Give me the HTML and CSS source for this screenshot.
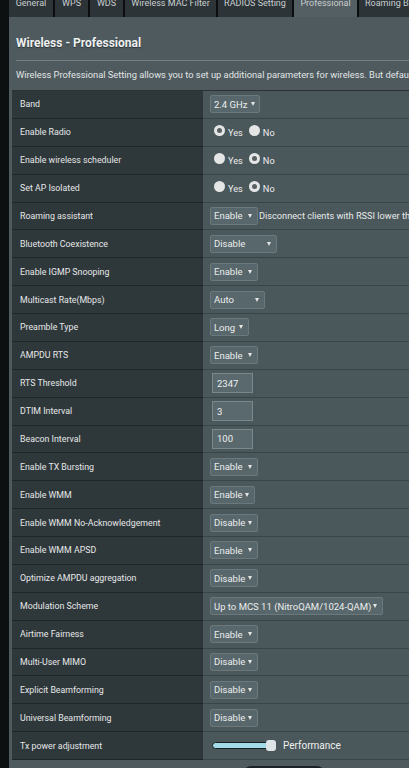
FILE: index.html
```html
<!DOCTYPE html>
<html lang="en">
<head>
<meta charset="utf-8">
<title>Wireless - Professional</title>
<link rel="stylesheet" href="styles.css">
</head>
<body>
<div class="frame">
  <div class="tabs">
    <div class="tab t-general"><span>General</span></div>
    <div class="tab t-wps"><span>WPS</span></div>
    <div class="tab t-wds"><span>WDS</span></div>
    <div class="tab t-mac"><span>Wireless MAC Filter</span></div>
    <div class="tab t-radius"><span>RADIOS Setting</span></div>
    <div class="tab t-pro active"><span>Professional</span></div>
    <div class="tab t-roam"><span>Roaming Block List</span></div>
  </div>

  <h1 class="title">Wireless - Professional</h1>
  <div class="rule"></div>
  <p class="desc">Wireless Professional Setting allows you to set up additional parameters for wireless. But default values are recommended.</p>

  <div class="table">
    <div class="row"><div class="label">Band</div><div class="value"><div class="sel w50"><span>2.4 GHz</span><i class="arr"></i></div></div></div>
    <div class="row"><div class="label">Enable Radio</div><div class="value"><div class="radios"><span class="radio on"></span><span class="rt">Yes</span><span class="radio"></span><span class="rt">No</span></div></div></div>
    <div class="row"><div class="label">Enable wireless scheduler</div><div class="value"><div class="radios"><span class="radio"></span><span class="rt">Yes</span><span class="radio on"></span><span class="rt">No</span></div></div></div>
    <div class="row"><div class="label">Set AP Isolated</div><div class="value"><div class="radios"><span class="radio"></span><span class="rt">Yes</span><span class="radio on"></span><span class="rt">No</span></div></div></div>
    <div class="row"><div class="label">Roaming assistant</div><div class="value"><div class="sel w48"><span>Enable</span><i class="arr"></i></div><span class="note">Disconnect clients with RSSI lower than</span></div></div>
    <div class="row"><div class="label">Bluetooth Coexistence</div><div class="value"><div class="sel w67"><span>Disable</span><i class="arr"></i></div></div></div>
    <div class="row"><div class="label">Enable IGMP Snooping</div><div class="value"><div class="sel w48"><span>Enable</span><i class="arr"></i></div></div></div>
    <div class="row"><div class="label">Multicast Rate(Mbps)</div><div class="value"><div class="sel w55"><span>Auto</span><i class="arr"></i></div></div></div>
    <div class="row"><div class="label">Preamble Type</div><div class="value"><div class="sel w39"><span>Long</span><i class="arr"></i></div></div></div>
    <div class="row"><div class="label">AMPDU RTS</div><div class="value"><div class="sel w48"><span>Enable</span><i class="arr"></i></div></div></div>
    <div class="row"><div class="label">RTS Threshold</div><div class="value"><div class="inp">2347</div></div></div>
    <div class="row"><div class="label">DTIM Interval</div><div class="value"><div class="inp">3</div></div></div>
    <div class="row"><div class="label">Beacon Interval</div><div class="value"><div class="inp">100</div></div></div>
    <div class="row"><div class="label">Enable TX Bursting</div><div class="value"><div class="sel w48"><span>Enable</span><i class="arr"></i></div></div></div>
    <div class="row"><div class="label">Enable WMM</div><div class="value"><div class="sel w45"><span>Enable</span><i class="arr"></i></div></div></div>
    <div class="row"><div class="label">Enable WMM No-Acknowledgement</div><div class="value"><div class="sel w48"><span>Disable</span><i class="arr"></i></div></div></div>
    <div class="row"><div class="label">Enable WMM APSD</div><div class="value"><div class="sel w48"><span>Enable</span><i class="arr"></i></div></div></div>
    <div class="row"><div class="label">Optimize AMPDU aggregation</div><div class="value"><div class="sel w48"><span>Disable</span><i class="arr"></i></div></div></div>
    <div class="row"><div class="label">Modulation Scheme</div><div class="value"><div class="sel w173"><span>Up to MCS 11 (NitroQAM/1024-QAM)</span><i class="arr"></i></div></div></div>
    <div class="row"><div class="label">Airtime Fairness</div><div class="value"><div class="sel w48"><span>Enable</span><i class="arr"></i></div></div></div>
    <div class="row"><div class="label">Multi-User MIMO</div><div class="value"><div class="sel w48"><span>Disable</span><i class="arr"></i></div></div></div>
    <div class="row"><div class="label">Explicit Beamforming</div><div class="value"><div class="sel w48"><span>Disable</span><i class="arr"></i></div></div></div>
    <div class="row"><div class="label">Universal Beamforming</div><div class="value"><div class="sel w48"><span>Disable</span><i class="arr"></i></div></div></div>
    <div class="row"><div class="label">Tx power adjustment</div><div class="value"><div class="slider"><div class="track"></div><div class="thumb"></div></div><span class="perf">Performance</span></div></div>
  </div>
  <div class="apply"></div>
</div>
</body>
</html>
```

FILE: styles.css
```css
* { box-sizing: border-box; }
html, body { margin: 0; padding: 0; }
body {
  background: #0d1011;
  font-family: Roboto, "Liberation Sans", sans-serif;
  overflow: hidden;
  width: 409px;
  height: 768px;
}
.frame {
  margin-left: 9px;
  width: 400px;
  height: 768px;
  background: #4e5a5e;
  overflow: hidden;
}
.tabs {
  display: flex;
  gap: 2px;
  height: 17px;
  background: #0b0d0e;
  white-space: nowrap;
  overflow: hidden;
}
.tab {
  flex: none;
  background: #2c3437;
  color: #c9ced0;
  font-size: 9px;
  text-align: center;
  overflow: hidden;
}
.tab span { display: block; line-height: 10px; margin-top: -2px; }
.tab.active { background: #545f63; }
.t-general { width: 44px; }
.t-wps { width: 33px; }
.t-wds { width: 33px; }
.t-mac { width: 91px; }
.t-radius { width: 74px; }
.t-pro { width: 63px; }
.t-roam { width: 90px; text-align: left; padding-left: 6px; }

.title {
  margin: 19px 0 0 7px;
  font-size: 12px;
  line-height: 14px;
  font-weight: 700;
  color: #eef0f0;
  text-shadow: 0 1px 1px #2a3134;
}
.rule {
  margin: 10px 0 0 7px;
  height: 1px;
  background: #758184;
}
.desc {
  margin: 8px 0 0 7px;
  font-size: 9.3px;
  line-height: 12px;
  color: #e2e5e6;
  white-space: nowrap;
}
.table {
  margin: 9px 0 0 3px;
  width: 600px;
  border-top: 1px solid #2a3235;
}
.row {
  display: flex;
  height: 27.875px;
}
.label {
  flex: none;
  width: 191px;
  background: #2e373a;
  border-bottom: 1px solid #20272a;
  padding-left: 8px;
  display: flex;
  align-items: center;
  font-size: 8.8px;
  color: #e6e8e9;
}
.value {
  flex: 1;
  background: #4a575b;
  border-bottom: 1px solid #394447;
  padding-left: 7px;
  display: flex;
  align-items: center;
  white-space: nowrap;
  color: #e8eaea;
}
.sel {
  height: 18px;
  background: #58676b;
  border: 1px solid #6b797d;
  border-radius: 2px;
  display: flex;
  align-items: center;
  justify-content: space-between;
  padding: 0 5px 0 3px;
  font-size: 9.5px;
  color: #eceeee;
}
.arr {
  flex: none;
  width: 0; height: 0;
  border-left: 2.5px solid transparent;
  border-right: 2.5px solid transparent;
  border-top: 4px solid #e6e8e8;
}
.w39 { width: 39px; }
.w45 { width: 45px; }
.w48 { width: 48px; }
.w50 { width: 50px; padding-right: 4px; }
.w55 { width: 55px; }
.w67 { width: 67px; }
.w173 { width: 173px; }
.note {
  margin-left: 1px;
  font-size: 9.2px;
  color: #e8eaea;
}
.radios {
  display: flex;
  align-items: center;
  margin-left: 4px;
}
.radio {
  width: 11px;
  height: 11px;
  border-radius: 50%;
  background: #e4e6e6;
  display: flex;
  align-items: center;
  justify-content: center;
  margin-top: -3px;
}
.radio.on::after {
  content: "";
  width: 5px;
  height: 5px;
  border-radius: 50%;
  background: #5a5f61;
}
.rt {
  font-size: 9.2px;
  margin: 1px 6px 0 3px;
  color: #eceeee;
}
.inp {
  margin-left: 2px;
  width: 41px;
  height: 20px;
  background: #5a696d;
  border: 1px solid #7a888c;
  font-size: 9.5px;
  padding-left: 4px;
  display: flex;
  align-items: center;
  color: #eef0f0;
}
.slider {
  position: relative;
  width: 65px;
  height: 11px;
  margin-left: 2px;
  display: flex;
  align-items: center;
}
.track {
  width: 62px;
  height: 7px;
  background: #a4dbeb;
  border: 1px solid #1a2022;
  border-radius: 4px;
}
.thumb {
  position: absolute;
  left: 54px;
  top: 0;
  width: 10px;
  height: 11px;
  border-radius: 3px;
  background: #dfe5e7;
}
.perf {
  margin-left: 6px;
  font-size: 10px;
  color: #eef0f0;
}
.apply {
  margin: 6px 0 0 234px;
  width: 82px;
  height: 20px;
  background: #1d2427;
  border-radius: 8px;
}
```
